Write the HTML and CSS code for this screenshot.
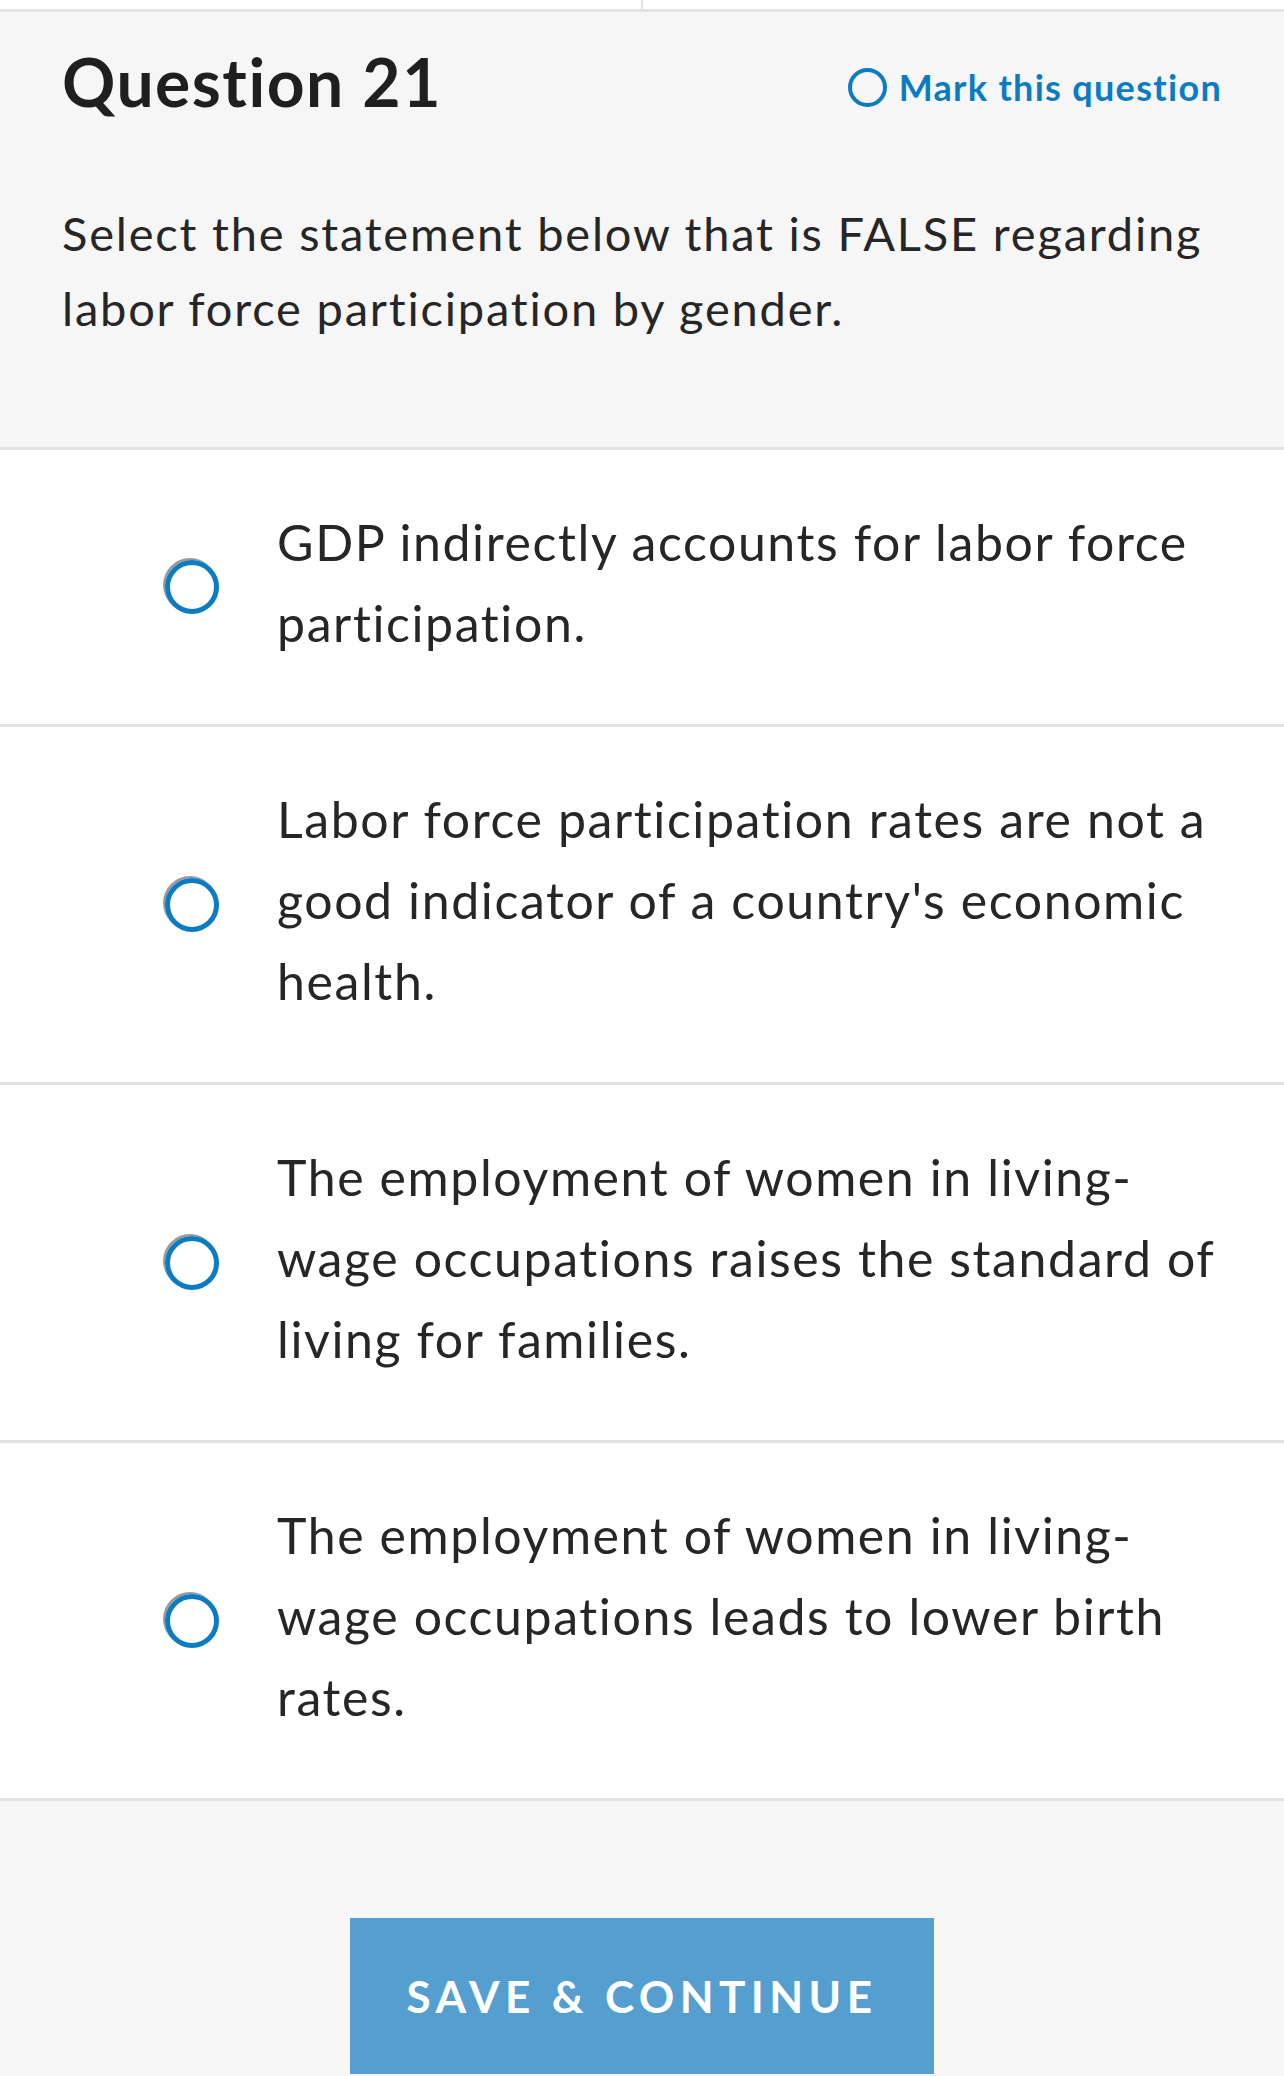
FILE: index.html
```html
<!DOCTYPE html>
<html lang="en">
<head>
<meta charset="utf-8">
<title>Question 21</title>
<link rel="stylesheet" href="styles.css">
</head>
<body>
<div class="tabs"><div class="tab tab-left"></div><div class="tab"></div></div>
<section class="header">
  <div class="title-row">
    <h1 class="title">Question 21</h1>
    <a class="mark" href="#"><span class="mark-circle"></span><span class="mark-text">Mark this question</span></a>
  </div>
  <p class="prompt">Select the statement below that is FALSE regarding<br>labor force participation by gender.</p>
</section>
<ul class="options">
  <li class="option"><span class="radio"></span><span class="option-text">GDP indirectly accounts for labor force<br>participation.</span></li>
  <li class="option"><span class="radio"></span><span class="option-text">Labor force participation rates are not a<br>good indicator of a country's economic<br>health.</span></li>
  <li class="option"><span class="radio"></span><span class="option-text">The employment of women in living-<br>wage occupations raises the standard of<br>living for families.</span></li>
  <li class="option"><span class="radio"></span><span class="option-text">The employment of women in living-<br>wage occupations leads to lower birth<br>rates.</span></li>
</ul>
<div class="footer">
  <button class="save" type="button">SAVE &amp; CONTINUE</button>
</div>
</body>
</html>
```
FILE: styles.css
```css
* { box-sizing: border-box; }
html, body { margin: 0; padding: 0; }
body {
  background: #f6f6f6;
  font-family: Lato, "Liberation Sans", sans-serif;
  color: #262626;
  width: 1284px;
  height: 2076px;
  overflow: hidden;
}
.tabs {
  display: flex;
  height: 9px;
  background: #ffffff;
}
.tab { flex: 1; }
.tab-left { border-right: 2px solid #e2e2e4; }
.header {
  border-top: 3px solid #e2e2e4;
  padding: 30px 62px 101px 62px;
}
.title-row {
  display: flex;
  justify-content: space-between;
  align-items: flex-start;
}
.title {
  margin: 0;
  font-size: 66px;
  line-height: 79px;
  font-weight: 700;
  color: #1f1f1f;
  letter-spacing: 1.5px;
}
.mark {
  display: flex;
  align-items: center;
  gap: 12px;
  margin-top: 24px;
  text-decoration: none;
  color: #0c7cc2;
}
.mark-circle {
  width: 39px;
  height: 39px;
  border: 4px solid #0c7cc2;
  border-radius: 50%;
}
.mark-text {
  font-size: 36px;
  line-height: 43px;
  font-weight: 700;
  letter-spacing: 1.3px;
}
.prompt {
  margin: 75px 0 0 0;
  font-size: 47px;
  line-height: 75px;
  letter-spacing: 1.8px;
  white-space: nowrap;
  color: #262626;
}
.options {
  list-style: none;
  margin: 0;
  padding: 0;
  border-bottom: 3px solid #e2e2e4;
}
.option {
  display: flex;
  align-items: center;
  gap: 58px;
  background: #ffffff;
  border-top: 3px solid #e2e2e4;
  padding: 52px 20px 60px 165px;
}
.radio {
  flex: none;
  width: 54px;
  height: 54px;
  margin-top: 8px;
  border: 5px solid #0c7cc2;
  border-radius: 50%;
  box-shadow: -2px -2px 0 0 rgba(110, 110, 110, 0.7);
}
.option-text {
  font-size: 50px;
  line-height: 81px;
  letter-spacing: 1.6px;
  white-space: nowrap;
  color: #262626;
}
.footer {
  display: flex;
  justify-content: center;
  padding-top: 117px;
}
.save {
  width: 584px;
  height: 156px;
  border: none;
  border-radius: 0;
  background: #549fd0;
  color: #ffffff;
  font-family: Lato, "Liberation Sans", sans-serif;
  font-size: 44px;
  font-weight: 700;
  letter-spacing: 5.4px;
  padding: 0;
}
```
